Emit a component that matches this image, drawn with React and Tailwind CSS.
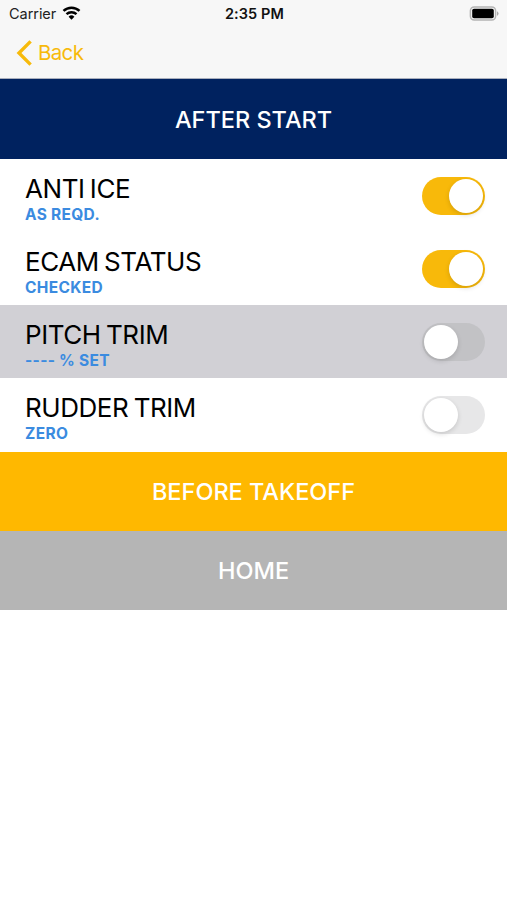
import React, { useState } from 'react';

const initialItems = [
  { id: 'anti-ice', title: 'ANTI ICE', detail: 'AS REQD.', done: true },
  { id: 'ecam', title: 'ECAM STATUS', detail: 'CHECKED', done: true },
  { id: 'pitch', title: 'PITCH TRIM', detail: '---- % SET', done: false, highlighted: true },
  { id: 'rudder', title: 'RUDDER TRIM', detail: 'ZERO', done: false },
];

const StatusBar = () => (
  <div className="grid grid-cols-3 items-center h-[27px] pl-[9px] pr-[7px] text-black">
    <div className="flex items-center gap-[6px]">
      <span className="pt-px text-[14.5px] leading-none tracking-[-0.05px] text-[#222]">Carrier</span>
      <svg className="-mt-px" width="19" height="14" viewBox="0 0 18 14" fill="none" stroke="currentColor" strokeWidth="2.5">
        <path d="M1 4.9a11.6 11.6 0 0 1 16 0" />
        <path d="M4 8.2a7.3 7.3 0 0 1 10 0" />
        <path d="M9 13.8 6.1 10.7a4.2 4.2 0 0 1 5.8 0z" fill="currentColor" stroke="none" />
      </svg>
    </div>
    <span className="pt-[2px] text-center text-[14.5px] leading-none font-semibold tracking-[0.1px] text-[#111]">
      2:35 PM
    </span>
    <svg className="justify-self-end" width="31" height="15" viewBox="0 0 31 15">
      <rect x="1.4" y="0.9" width="25.2" height="13.2" rx="3.8" fill="none" stroke="#b4b4b4" strokeWidth="1.5" />
      <rect x="3.2" y="2.7" width="21.6" height="9.6" rx="1.8" fill="#000" />
      <path d="M28 5.2a2.5 2.5 0 0 1 0 4.6z" fill="#a9a9a9" />
    </svg>
  </div>
);

const NavBar = () => (
  <div className="flex items-center h-[51px] pl-[16px]">
    <button className="flex items-center gap-[5px] text-[#f7ba0b]">
      <svg width="17" height="26" viewBox="0 0 17 26" fill="none" stroke="currentColor" strokeWidth="3.4">
        <path d="M14.6 1.4 3 13l11.6 11.6" />
      </svg>
      <span className="pt-px text-[20.5px] leading-none tracking-[-0.65px]">Back</span>
    </button>
  </div>
);

const Toggle = ({ on, highlighted, onClick }) => {
  const track = on ? 'bg-[#f8b90a]' : highlighted ? 'bg-[#c2c2c5]' : 'bg-[#e7e7e8]';
  return (
    <button
      role="switch"
      aria-checked={on}
      onClick={onClick}
      className={`flex items-center w-[63px] h-[38px] px-[2px] rounded-full ${track} ${on ? 'justify-end' : 'justify-start'}`}
    >
      <span className="size-[34px] rounded-full bg-white shadow-[0_2px_5px_rgba(0,0,0,0.14)]" />
    </button>
  );
};

const ChecklistRow = ({ item, onToggle }) => (
  <div
    className={`flex items-start justify-between h-[73.3px] pl-[25px] pr-[22px] ${
      item.highlighted ? 'bg-[#d1d0d5]' : 'bg-white'
    }`}
  >
    <div className="pt-[17px]">
      <p className="text-[26px] leading-[26px] tracking-[-0.45px] [word-spacing:-1.5px] text-black">{item.title}</p>
      <p className="text-[15.5px] leading-[25px] font-bold tracking-[0.35px] [word-spacing:-0.3px] text-[#3b8be0]">
        {item.detail}
      </p>
    </div>
    <div className="pt-[18px]">
      <Toggle on={item.done} highlighted={item.highlighted} onClick={() => onToggle(item.id)} />
    </div>
  </div>
);

export default function App() {
  const [items, setItems] = useState(initialItems);

  const handleToggle = (id) => {
    setItems(items.map((item) => (item.id === id ? { ...item, done: !item.done } : item)));
  };

  return (
    <div className="w-full h-screen overflow-hidden bg-white font-[Inter,sans-serif]">
      {/* Status and navigation */}
      <header className="h-[79px] bg-[#f7f7f7] border-b border-[#a9afbd]">
        <StatusBar />
        <NavBar />
      </header>

      <h1 className="flex items-center justify-center h-[79.5px] pt-px bg-[#00225f] text-white text-[23.5px] font-medium">
        AFTER START
      </h1>

      {/* Checklist */}
      {items.map((item) => (
        <ChecklistRow key={item.id} item={item} onToggle={handleToggle} />
      ))}

      {/* Page actions */}
      <button className="block w-full h-[79.3px] bg-[#ffb800] text-white text-[23.5px] font-medium">
        BEFORE TAKEOFF
      </button>
      <button className="block w-full h-[79.3px] bg-[#b5b5b5] text-white text-[23.5px] font-medium">HOME</button>
    </div>
  );
}
